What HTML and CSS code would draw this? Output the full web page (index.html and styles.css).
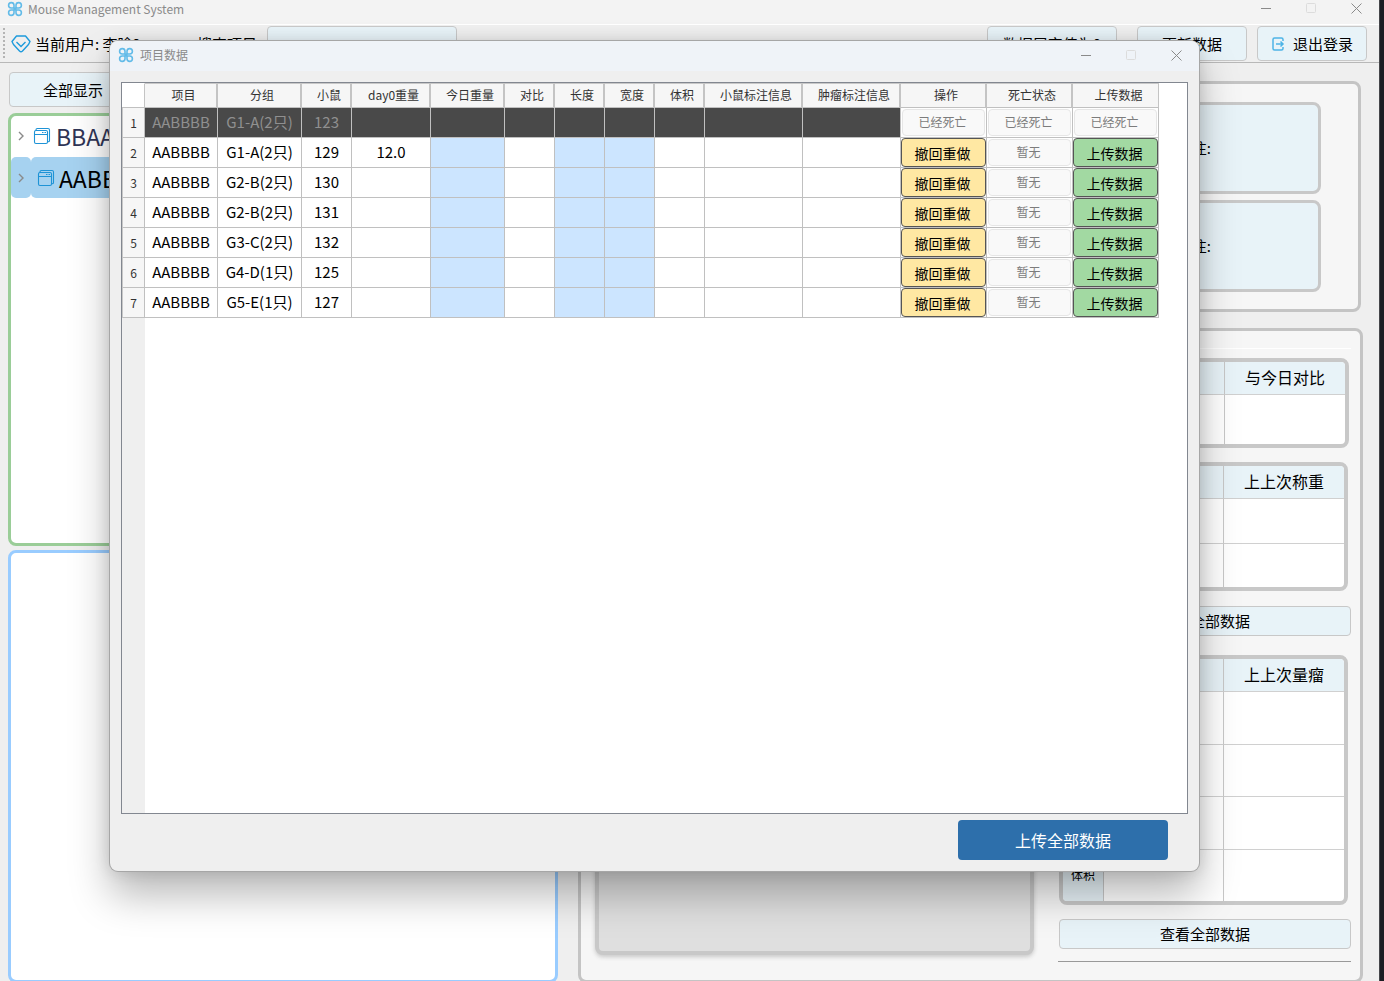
FILE: index.html
```html
<!DOCTYPE html>
<html lang="zh-CN">
<head>
<meta charset="utf-8">
<title>Mouse Management System</title>
<link rel="stylesheet" href="styles.css">
</head>
<body>
<svg class="defs" aria-hidden="true">
  <symbol id="clover" viewBox="0 0 16 16">
    <g fill="none" stroke="#62bbe8" stroke-width="1.6">
      <path d="M7 7H4.2A2.7 2.7 0 1 1 7 4.2zM9 7V4.2A2.7 2.7 0 1 1 11.8 7zM7 9v2.8A2.7 2.7 0 1 1 4.2 9zM9 9h2.8A2.7 2.7 0 1 1 9 11.8z"/>
      <path d="M6.500 6.500l3 3M9.500 6.500l-3 3"/>
    </g>
  </symbol>
  <symbol id="folder" viewBox="0 0 18 18">
    <g fill="none" stroke="#1e93d6" stroke-width="1.1">
      <rect x="1.500" y="3.500" width="13" height="13" rx="1.500"/>
      <path d="M1.500 7.500h13M3 3.500V2.800A1.300 1.300 0 0 1 4.300 1.500H15A1.500 1.500 0 0 1 16.500 3V13.500A1.300 1.300 0 0 1 15.200 14.800H14.500M9 5.500h1.500M11.500 5.500h1.500"/>
    </g>
  </symbol>
  <symbol id="chev" viewBox="0 0 8 10"><path d="M2 1l4 4-4 4" fill="none" stroke="#8a8a8a" stroke-width="1.400"/></symbol>
  <symbol id="min" viewBox="0 0 11 11"><path d="M0 5.500h10" stroke="#8a8a8a"/></symbol>
  <symbol id="max" viewBox="0 0 11 11"><rect x=".5" y=".5" width="9" height="9" rx="1" fill="none" stroke="#dcdcdc"/></symbol>
  <symbol id="close" viewBox="0 0 11 11"><path d="M.5 .5l10 10M10.500 .5l-10 10" stroke="#8a8a8a" fill="none"/></symbol>
</svg>

<div class="app">
  <header class="titlebar">
    <svg class="logo"><use href="#clover"/></svg>
    <span class="title">Mouse Management System</span>
    <div class="wincontrols">
      <button aria-label="最小化"><svg><use href="#min"/></svg></button>
      <button aria-label="最大化" disabled><svg><use href="#max"/></svg></button>
      <button aria-label="关闭"><svg><use href="#close"/></svg></button>
    </div>
  </header>

  <div class="toolbar">
    <span class="grip"></span>
    <svg class="gem" viewBox="0 0 20 18"><path d="M5.500 1h9L19 6.500 17.500 9.500 11.500 16q-1.500 1.500-3 0L2.500 9.500 1 6.500z" fill="none" stroke="#1e9bdc" stroke-width="1.400" stroke-linejoin="round"/><path d="M5.500 7l4.500 4.500L14.500 7" fill="none" stroke="#1e9bdc" stroke-width="1.400"/></svg>
    <span class="user">当前用户: 李晗2</span>
    <label class="search-label" for="search">搜索项目</label>
    <input class="search" id="search" type="text">
    <div class="tools">
      <button class="btn wide">数据层空值为0</button>
      <button class="btn">更新数据</button>
      <button class="btn logout"><svg viewBox="0 0 14 14"><path d="M12 4V2.500A1.500 1.500 0 0 0 10.500 1h-7A1.500 1.500 0 0 0 2 2.500v9A1.500 1.500 0 0 0 3.500 13h7A1.500 1.500 0 0 0 12 11.500V10M5 7H12M9.500 4.500L12 7 9.500 9.500" fill="none" stroke="#4db4e6" stroke-width="1.500"/></svg>退出登录</button>
    </div>
  </div>

  <main class="content">
    <section class="left">
      <div class="filters"><button class="btn show-all">全部显示</button></div>
      <ul class="tree">
        <li><span class="twist"><svg><use href="#chev"/></svg></span><span class="node"><svg><use href="#folder"/></svg>BBAA</span></li>
        <li class="selected"><span class="twist"><svg><use href="#chev"/></svg></span><span class="node"><svg><use href="#folder"/></svg>AABB</span></li>
      </ul>
      <div class="detail"></div>
    </section>

    <section class="right">
      <div class="group notes">
        <div class="note"><span>备注:</span></div>
        <div class="note"><span>备注:</span></div>
      </div>
      <div class="group records">
        <div class="preview"></div>
        <div class="stats">
          <hr class="light">
          <div class="grid g1">
            <table>
              <tr class="heads"><th class="rowh"></th><th></th><th>与今日对比</th></tr>
              <tr><td class="rowh"></td><td></td><td></td></tr>
            </table>
          </div>
          <div class="grid g2">
            <table>
              <tr class="heads"><th class="rowh"></th><th></th><th>上上次称重</th></tr>
              <tr><td class="rowh"></td><td></td><td></td></tr>
              <tr><td class="rowh"></td><td></td><td></td></tr>
            </table>
          </div>
          <button class="btn all">查看全部数据</button>
          <div class="grid g3">
            <table>
              <tr class="heads"><th class="rowh"></th><th></th><th>上上次量瘤</th></tr>
              <tr><td class="rowh"></td><td></td><td></td></tr>
              <tr><td class="rowh"></td><td></td><td></td></tr>
              <tr><td class="rowh"></td><td></td><td></td></tr>
              <tr><td class="rowh">体积</td><td></td><td></td></tr>
            </table>
          </div>
          <button class="btn all">查看全部数据</button>
          <hr class="dark">
        </div>
      </div>
    </section>
  </main>
</div>
<div class="edge"></div>

<div class="dialog" role="dialog" aria-label="项目数据">
  <header class="titlebar dialog-title">
    <svg class="logo"><use href="#clover"/></svg>
    <span class="title">项目数据</span>
    <div class="wincontrols">
      <button aria-label="最小化"><svg><use href="#min"/></svg></button>
      <button aria-label="最大化" disabled><svg><use href="#max"/></svg></button>
      <button aria-label="关闭"><svg><use href="#close"/></svg></button>
    </div>
  </header>
  <div class="sheet">
    <table class="data">
      <colgroup><col class="w23"><col class="w73"><col class="w84"><col class="w50"><col class="w79"><col class="w74"><col class="w50"><col class="w50"><col class="w50"><col class="w50"><col class="w98"><col class="w98"><col class="w86"><col class="w86"><col class="w86"></colgroup>
      <thead><tr><th class="corner"></th><th>项目</th><th>分组</th><th>小鼠</th><th>day0重量</th><th>今日重量</th><th>对比</th><th>长度</th><th>宽度</th><th>体积</th><th>小鼠标注信息</th><th>肿瘤标注信息</th><th>操作</th><th>死亡状态</th><th>上传数据</th></tr></thead>
      <tbody>
        <tr class="dead"><th>1</th><td>AABBBB</td><td>G1-A(2只)</td><td>123</td><td></td><td></td><td></td><td></td><td></td><td></td><td></td><td></td><td class="act"><button disabled>已经死亡</button></td><td class="act"><button disabled>已经死亡</button></td><td class="act"><button disabled>已经死亡</button></td></tr>
        <tr><th>2</th><td>AABBBB</td><td>G1-A(2只)</td><td>129</td><td>12.0</td><td class="edit"></td><td></td><td class="edit"></td><td class="edit"></td><td></td><td></td><td></td><td class="act"><button class="redo">撤回重做</button></td><td class="act"><button disabled>暂无</button></td><td class="act"><button class="up">上传数据</button></td></tr>
        <tr><th>3</th><td>AABBBB</td><td>G2-B(2只)</td><td>130</td><td></td><td class="edit"></td><td></td><td class="edit"></td><td class="edit"></td><td></td><td></td><td></td><td class="act"><button class="redo">撤回重做</button></td><td class="act"><button disabled>暂无</button></td><td class="act"><button class="up">上传数据</button></td></tr>
        <tr><th>4</th><td>AABBBB</td><td>G2-B(2只)</td><td>131</td><td></td><td class="edit"></td><td></td><td class="edit"></td><td class="edit"></td><td></td><td></td><td></td><td class="act"><button class="redo">撤回重做</button></td><td class="act"><button disabled>暂无</button></td><td class="act"><button class="up">上传数据</button></td></tr>
        <tr><th>5</th><td>AABBBB</td><td>G3-C(2只)</td><td>132</td><td></td><td class="edit"></td><td></td><td class="edit"></td><td class="edit"></td><td></td><td></td><td></td><td class="act"><button class="redo">撤回重做</button></td><td class="act"><button disabled>暂无</button></td><td class="act"><button class="up">上传数据</button></td></tr>
        <tr><th>6</th><td>AABBBB</td><td>G4-D(1只)</td><td>125</td><td></td><td class="edit"></td><td></td><td class="edit"></td><td class="edit"></td><td></td><td></td><td></td><td class="act"><button class="redo">撤回重做</button></td><td class="act"><button disabled>暂无</button></td><td class="act"><button class="up">上传数据</button></td></tr>
        <tr><th>7</th><td>AABBBB</td><td>G5-E(1只)</td><td>127</td><td></td><td class="edit"></td><td></td><td class="edit"></td><td class="edit"></td><td></td><td></td><td></td><td class="act"><button class="redo">撤回重做</button></td><td class="act"><button disabled>暂无</button></td><td class="act"><button class="up">上传数据</button></td></tr>
      </tbody>
    </table>
  </div>
  <footer><button class="upload-all">上传全部数据</button></footer>
</div>
</body>
</html>
```
FILE: styles.css
```css
* { box-sizing: border-box; }
body {
  margin: 0;
  height: 100vh;
  overflow: hidden;
  display: flex;
  position: relative;
  background: #efefef;
  color: #000;
  font: 15px/20px "Noto Sans CJK SC", sans-serif;
}
button, input { font: inherit; color: inherit; }
button { padding: 0; }
ul { list-style: none; margin: 0; padding: 0; }
.defs { position: absolute; width: 0; height: 0; }
.app { flex: 1; min-width: 0; display: flex; flex-direction: column; }
.edge { width: 5px; background: #1b1c22; border-left: 1px solid #45464a; }

/* window title bars */
.titlebar {
  display: flex;
  align-items: center;
  flex: none;
  height: 24px;
  padding: 0 17px 7px 7px;
  background: #f3f3f3;
  color: #8a8a8a;
  font: 12px/16px "Noto Sans CJK SC", sans-serif;
}
.logo { width: 16px; height: 16px; margin-right: 5px; }
.wincontrols { display: flex; gap: 34px; margin-left: auto; }
.wincontrols button { display: flex; border: 0; background: none; }
.wincontrols svg { width: 11px; height: 11px; }

/* toolbar */
.toolbar {
  display: flex;
  align-items: center;
  flex: none;
  height: 39px;
  padding: 0 12px 0 3px;
  border-top: 1px solid #fff;
  border-bottom: 1px solid #b8b8b8;
}
.grip { width: 2px; height: 31px; margin-right: 6px; background: repeating-linear-gradient(#b4b4b4 0 2px, transparent 2px 4px); }
.gem { width: 20px; height: 18px; margin-right: 4px; }
.user { width: 162px; }
.search-label { width: 70px; }
.search, .btn {
  height: 35px;
  border: 1px solid #c8c8c8;
  border-radius: 4px;
  background: #e8f3f8;
}
.search { width: 190px; }
.tools { display: flex; margin-left: auto; }
.tools .btn { width: 110px; margin-left: 10px; }
.tools .wide { width: 130px; margin-right: 10px; }
.logout { display: flex; align-items: center; justify-content: center; gap: 8px; }
.logout svg { width: 14px; height: 14px; }

.content { flex: 1; min-height: 0; display: flex; gap: 20px; margin-bottom: -2px; padding: 9px 16px 0 8px; }

/* project tree column */
.left { flex: 0 0 550px; display: flex; flex-direction: column; }
.filters { display: flex; padding-left: 1px; margin-bottom: 6px; }
.show-all { width: 128px; }
.tree { height: 433px; border: 3px solid #9acd98; border-radius: 8px; background: #fff; }
.tree li { display: flex; height: 41px; padding-bottom: 1px; color: #2f3556; font-size: 23px; line-height: 36px; }
.tree .selected { color: #000; padding-bottom: 0; }
.tree .selected span { background: #a6d2f0; }
.twist { display: flex; align-items: center; width: 20px; padding-left: 6px; border-radius: 5px; }
.twist svg { width: 8px; height: 10px; }
.node { flex: 1; display: flex; align-items: center; gap: 5px; padding-left: 2px; border-radius: 5px; }
.selected .node { padding-left: 6px; gap: 4px; }
.node svg { width: 18px; height: 18px; }
.detail { flex: 1; margin-top: 4px; border: 3px solid #99ccff; border-radius: 8px; background: #fff; }

/* record panels */
.right { flex: 1; display: flex; flex-direction: column; gap: 16px; padding-top: 9px; }
.group { border: 3px solid #c4c4c4; border-radius: 8px; background: #f6f6f6; }
.notes { margin-right: 2px; height: 231px; padding: 18px 37px 17px 16px; display: flex; flex-direction: column; gap: 6px; }
.note { flex: 1; display: flex; align-items: center; justify-content: flex-end; padding-right: 107px; border: 3px solid #c8c8c8; border-radius: 8px; background: #e8f3f8; }
.records { flex: 1; display: flex; justify-content: space-between; padding: 17px 9px 0 14px; }
.preview { width: 439px; height: 607px; border: 4px solid #c8c8c8; border-radius: 8px; background: #dfdfdf; box-shadow: 0 2px 4px #c8c8c8; }
.stats { width: 293px; display: flex; flex-direction: column; }
.stats hr { flex: none; height: 1px; margin: 0; border: 0; }
.stats .light { background: #fff; }
.stats .dark { margin-top: 12px; background: #999; }
.grid { flex: none; margin: 0 3px 0 1px; border: 4px solid #c8c8c8; border-radius: 8px; background: #fff; overflow: hidden; }
.grid table { width: 100%; height: 100%; border-collapse: separate; border-spacing: 0; table-layout: fixed; }
.grid th { padding: 0 0 2px; background: #e8f3f8; font-size: 16px; font-weight: 400; }
.grid td { padding: 0; border-top: 1px solid #d0d0d0; }
.grid .heads { height: 32px; }
.grid tr > :nth-child(2) { border-left: 1px solid #c8c8c8; border-right: 1px solid #c8c8c8; }
.grid tr > :nth-child(3) { width: 120px; }
.grid .rowh { width: 40px; background: #e8f3f8; font-size: 12px; text-align: center; }
.g1 { height: 90px; margin-top: 9px; margin-right: 2px; }
.g2 { height: 129px; margin-top: 14px; }
.g2 tr:not(.heads) { height: 44px; }
.g3 { height: 250px; margin-top: 19px; }
.g3 tr:not(.heads) { height: 52px; }
.all { flex: none; height: 30px; margin: 14px 0 0 1px; }
.g2 + .all { margin-top: 15px; }

/* data dialog */
.dialog {
  position: absolute;
  top: 41px;
  right: 185px;
  bottom: 110px;
  left: 110px;
  display: flex;
  flex-direction: column;
  overflow: hidden;
  border-radius: 8px;
  background: #efefef;
  box-shadow: 0 0 0 1px #a6a6a6, 0 24px 40px rgba(0, 0, 0, .28), 0 0 16px rgba(0, 0, 0, .14);
}
.dialog-title { height: 30px; padding: 0 17px 2px 8px; background: #eff3f8; }
.dialog-title .logo { margin-right: 6px; }
.sheet {
  flex: 1;
  margin: 11px 11px 6px;
  border: 1px solid #828790;
  background: linear-gradient(to right, #efefef 23px, #fff 23px);
}
.data { border-collapse: separate; border-spacing: 0; table-layout: fixed; width: 1037px; }
.w23 { width: 23px; } .w50 { width: 50px; } .w73 { width: 73px; } .w74 { width: 74px; }
.w79 { width: 79px; } .w84 { width: 84px; } .w86 { width: 86px; } .w98 { width: 98px; }
.data th, .data td {
  height: 30px;
  padding: 0 0 2px;
  border-right: 1px solid #c0c0c0;
  border-bottom: 1px solid #c0c0c0;
  text-align: center;
  white-space: nowrap;
  line-height: 20px;
  background: #fff;
}
.data th { background: #f6f6f6; color: #333; font-size: 12px; font-weight: 400; }
.data tbody th { padding: 0; border-left: 1px solid #c8c8c8; }
.data thead th { height: 25px; padding-left: 6px; border-top: 1px solid #c8c8c8; border-right: 2px solid #c4c4c4; }
.data thead th:last-child { border-right-width: 1px; }
.data thead .corner { background: #fff; border-top-color: #fff; border-right-width: 1px; }
.data .dead td { background: #494949; color: #909090; }
.data .edit { background: #cce5ff; }
.data .act, .data .dead .act { padding: 0; background: #fff; }
.act button { display: block; width: 85px; height: 29px; padding: 0 2px 0 0; border: 1px solid #555; border-radius: 4px; font-size: 14px; }
.act .redo { background: #ffe8a3; }
.act .up { background: #a2d9a2; }
.act button:disabled { width: 83px; height: 27px; margin: 1px; padding-bottom: 2px; border-color: #e6e6e6; background: #f9f9f9; color: #7c7c7c; font-size: 12px; }
footer { display: flex; justify-content: flex-end; padding: 0 31px 11px; }
.upload-all { width: 210px; height: 40px; border: 0; border-radius: 4px; background: #2d6fab; color: #fff; font-size: 16px; }
```
